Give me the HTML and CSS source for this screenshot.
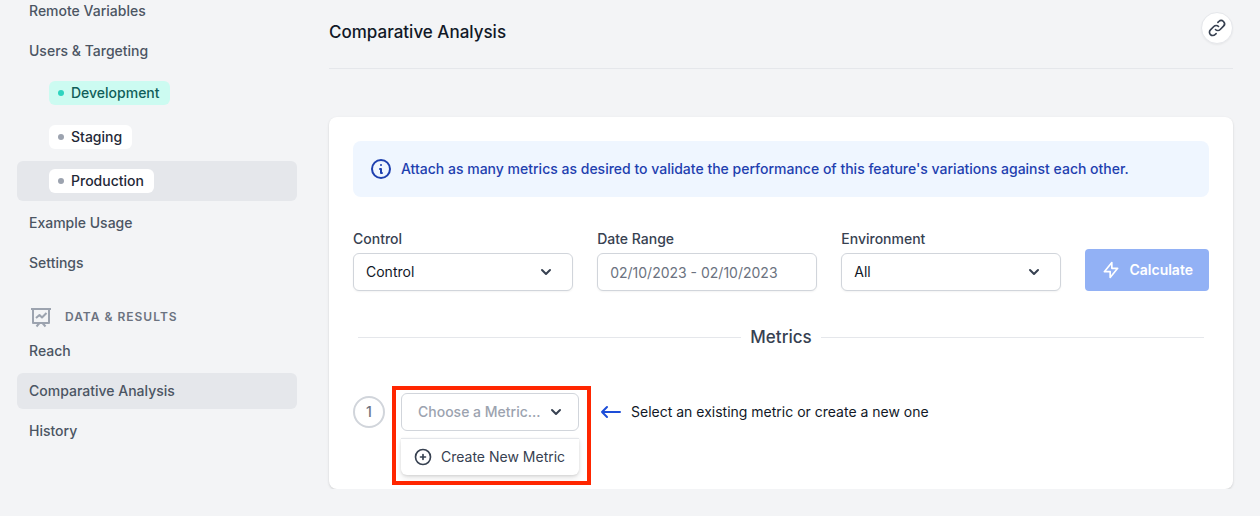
FILE: index.html
```html
<!DOCTYPE html>
<html lang="en">
<head>
<meta charset="utf-8">
<title>Comparative Analysis</title>
<link rel="stylesheet" href="styles.css">
</head>
<body>
<div class="layout">
  <nav class="sidebar" aria-label="Feature">
    <a class="nav-link" href="#variables">Remote Variables</a>
    <a class="nav-link" href="#targeting">Users &amp; Targeting</a>
    <a class="nav-env" href="#development"><span class="badge badge-teal">Development</span></a>
    <a class="nav-env" href="#staging"><span class="badge">Staging</span></a>
    <a class="nav-env is-active" href="#production"><span class="badge">Production</span></a>
    <a class="nav-link" href="#usage">Example Usage</a>
    <a class="nav-link" href="#settings">Settings</a>
    <h2 class="nav-heading">
      <svg class="icon-24" viewBox="0 0 24 24" fill="none" stroke="currentColor" stroke-width="2" stroke-linejoin="round" aria-hidden="true"><path d="M2 4H22M4 4V18H20V4M7 13L10.500 10L13 12.500L17.500 8M10.500 18L7.500 21.500M13.500 18L16.500 21.500"/></svg>
      Data &amp; Results
    </h2>
    <a class="nav-link" href="#reach">Reach</a>
    <a class="nav-link is-active" href="#analysis" aria-current="page">Comparative Analysis</a>
    <a class="nav-link" href="#history">History</a>
  </nav>

  <main class="main">
    <header class="page-header">
      <h1 class="page-title">Comparative Analysis</h1>
      <button class="link-button" type="button" aria-label="Copy link">
        <svg class="icon-20" viewBox="0 0 24 24" fill="none" stroke="currentColor" stroke-width="2" stroke-linecap="round" stroke-linejoin="round" aria-hidden="true"><path d="M13.828 10.172a4 4 0 00-5.656 0l-4 4a4 4 0 105.656 5.656l1.102-1.101m-.758-4.899a4 4 0 005.656 0l4-4a4 4 0 00-5.656-5.656l-1.100 1.100"/></svg>
      </button>
    </header>

    <section class="card">
      <div class="notice">
        <svg class="icon-24" viewBox="0 0 24 24" fill="none" stroke="currentColor" stroke-width="2" stroke-linecap="round" stroke-linejoin="round" aria-hidden="true"><path d="M13 16h-1v-4h-1m1-4h.01M21 12a9 9 0 11-18 0 9 9 0 0118 0z"/></svg>
        <p class="notice-text">Attach as many metrics as desired to validate the performance of this feature's variations against each other.</p>
      </div>

      <form class="filters">
        <div class="field">
          <label class="field-label" for="control">Control</label>
          <div class="select">
            <select class="input" id="control"><option>Control</option></select>
            <svg class="chevron select-chevron" viewBox="0 0 20 20" fill="currentColor" aria-hidden="true"><path fill-rule="evenodd" d="M5.293 7.293a1 1 0 011.414 0L10 10.586l3.293-3.293a1 1 0 111.414 1.414l-4 4a1 1 0 01-1.414 0l-4-4a1 1 0 010-1.414z"/></svg>
          </div>
        </div>
        <div class="field">
          <label class="field-label" for="range">Date Range</label>
          <input class="input input-muted" id="range" type="text" value="02/10/2023 - 02/10/2023">
        </div>
        <div class="field">
          <label class="field-label" for="environment">Environment</label>
          <div class="select">
            <select class="input" id="environment"><option>All</option></select>
            <svg class="chevron select-chevron" viewBox="0 0 20 20" fill="currentColor" aria-hidden="true"><path fill-rule="evenodd" d="M5.293 7.293a1 1 0 011.414 0L10 10.586l3.293-3.293a1 1 0 111.414 1.414l-4 4a1 1 0 01-1.414 0l-4-4a1 1 0 010-1.414z"/></svg>
          </div>
        </div>
        <button class="calculate" type="button">
          <svg class="icon-20" viewBox="0 0 24 24" fill="none" stroke="currentColor" stroke-width="2" stroke-linecap="round" stroke-linejoin="round" aria-hidden="true"><path d="M13 10V3L4 14h7v7l9-11h-7z"/></svg>
          Calculate
        </button>
      </form>

      <h2 class="divider">Metrics</h2>

      <div class="metric-row">
        <span class="step">1</span>
        <div class="dropdown">
          <button class="dropdown-toggle" type="button" aria-haspopup="menu" aria-expanded="true">
            Choose a Metric...
            <svg class="chevron" viewBox="0 0 20 20" fill="currentColor" aria-hidden="true"><path fill-rule="evenodd" d="M5.293 7.293a1 1 0 011.414 0L10 10.586l3.293-3.293a1 1 0 111.414 1.414l-4 4a1 1 0 01-1.414 0l-4-4a1 1 0 010-1.414z"/></svg>
          </button>
          <div class="menu" role="menu">
            <button class="menu-item" type="button" role="menuitem">
              <svg class="icon-20" viewBox="0 0 24 24" fill="none" stroke="currentColor" stroke-width="2" stroke-linecap="round" stroke-linejoin="round" aria-hidden="true"><path d="M12 9v6m3-3H9m12 0a9 9 0 11-18 0 9 9 0 0118 0z"/></svg>
              Create New Metric
            </button>
          </div>
          <div class="highlight"></div>
        </div>
        <p class="hint">
          <svg class="icon-24" viewBox="0 0 24 24" fill="none" stroke="currentColor" stroke-width="2" stroke-linecap="round" stroke-linejoin="round" aria-hidden="true"><path d="M8 7L3 12m0 0l5 5m-5-5h18"/></svg>
          Select an existing metric or create a new one
        </p>
      </div>
    </section>
  </main>
</div>
</body>
</html>
```

FILE: styles.css
```css
* {
  box-sizing: border-box;
  margin: 0;
}

body {
  background: #f3f4f6;
  color: #111827;
  font: 500 14px/20px Inter, sans-serif;
}

button,
input,
select {
  font: inherit;
  color: inherit;
}

svg {
  display: block;
  flex: none;
}

.icon-20 { width: 20px; height: 20px; }
.icon-24 { width: 24px; height: 24px; }
.chevron { width: 20px; height: 20px; color: #374151; }

.layout {
  display: grid;
  grid-template-columns: 280px minmax(0, 1fr);
  gap: 32px;
  padding: 0 27px 0 17px;
}

/* Sidebar */
.sidebar {
  display: flex;
  flex-direction: column;
  gap: 4px;
  margin-top: -7px;
}

.nav-link,
.nav-env {
  border-radius: 6px;
  color: #4b5563;
  text-decoration: none;
}

.nav-link { padding: 8px 12px; }
.nav-env { display: flex; padding: 8px 32px; }
.is-active { background: #e5e7eb; }

.badge {
  display: flex;
  align-items: center;
  gap: 7px;
  padding: 2px 10px 2px 9px;
  border-radius: 6px;
  background: #fff;
  color: #1f2937;
}

.badge::before {
  content: "";
  width: 6px;
  height: 6px;
  border-radius: 50%;
  background: #9ca3af;
}

.badge-teal { background: #ccfbf1; color: #115e59; }
.badge-teal::before { background: #2dd4bf; }

.nav-heading {
  display: flex;
  align-items: center;
  gap: 12px;
  margin-top: 20px;
  padding: 0 12px;
  color: #6b7280;
  font-size: 12px;
  font-weight: 600;
  letter-spacing: 1px;
  text-transform: uppercase;
}

.nav-heading svg { color: #9ca3af; }

/* Page header */
.page-header {
  display: flex;
  align-items: center;
  justify-content: space-between;
  padding: 12px 0 24px;
  border-bottom: 1px solid #e5e7eb;
}

.page-title {
  font-size: 17px;
  font-weight: 500;
  line-height: 24px;
  padding-top: 8px;
}

.link-button {
  display: grid;
  place-items: center;
  width: 32px;
  height: 32px;
  padding: 0;
  border: 1px solid #e5e7eb;
  border-radius: 50%;
  background: #fff;
  color: #374151;
  box-shadow: 0 1px 2px rgba(0, 0, 0, 0.05);
}

.card {
  margin-top: 48px;
  padding: 24px;
  border-radius: 8px;
  background: #fff;
  box-shadow: 0 1px 3px rgba(0, 0, 0, 0.1), 0 1px 2px rgba(0, 0, 0, 0.06);
}

.notice {
  display: flex;
  align-items: center;
  gap: 8px;
  padding: 16px;
  border-radius: 8px;
  background: #eff6ff;
  color: #1e40af;
}

/* Filters */
.filters {
  display: grid;
  grid-template-columns: repeat(3, minmax(0, 1fr)) auto;
  align-items: end;
  gap: 24px;
  margin-top: 32px;
}

.field-label {
  display: block;
  margin-bottom: 4px;
  color: #374151;
}

.select { position: relative; }

.input {
  appearance: none;
  display: block;
  width: 100%;
  height: 38px;
  padding: 0 12px;
  border: 1px solid #d1d5db;
  border-radius: 6px;
  background: #fff;
  font-weight: 400;
  box-shadow: 0 1px 2px rgba(0, 0, 0, 0.05);
}

.input-muted { color: #6b7280; }

.select-chevron {
  position: absolute;
  top: 9px;
  right: 17px;
  pointer-events: none;
}

.calculate {
  display: flex;
  align-items: center;
  gap: 8px;
  height: 42px;
  padding: 0 16px;
  border: 0;
  border-radius: 4px;
  background: #92b1f5;
  color: #fff;
  font-weight: 600;
}

.divider {
  display: flex;
  align-items: center;
  gap: 9px;
  margin-top: 32px;
  padding: 0 5px;
  color: #374151;
  font-size: 17px;
  font-weight: 500;
  line-height: 28px;
}

.divider::before,
.divider::after {
  content: "";
  flex: 1;
  border-top: 1px solid #e5e7eb;
}

/* Metric picker */
.metric-row {
  display: flex;
  align-items: center;
  margin: 42px 0 34px;
}

.step {
  width: 32px;
  height: 32px;
  margin-right: 16px;
  border: 2px solid #d1d5db;
  border-radius: 50%;
  color: #6b7280;
  line-height: 28px;
  text-align: center;
}

.dropdown {
  position: relative;
  width: 178px;
}

.dropdown-toggle {
  display: flex;
  align-items: center;
  justify-content: space-between;
  width: 100%;
  height: 38px;
  padding: 0 12px 0 16px;
  border: 1px solid #d1d5db;
  border-radius: 6px;
  background: #fff;
  color: #9ca3af;
  white-space: nowrap;
}

.menu {
  position: absolute;
  top: 45px;
  left: 0;
  width: 100%;
  border-top: 1px solid #e5e7eb;
  border-radius: 0 0 6px 6px;
  background: #fff;
  box-shadow: 0 4px 6px rgba(0, 0, 0, 0.08), 0 1px 3px rgba(0, 0, 0, 0.12);
}

.menu-item {
  display: flex;
  align-items: center;
  gap: 8px;
  width: 100%;
  height: 36px;
  padding: 0 12px;
  border: 0;
  background: none;
  color: #374151;
  font-weight: 400;
  white-space: nowrap;
}

.highlight {
  position: absolute;
  inset: -7px -12px -54px -9px;
  border: 4px solid #ff2600;
  pointer-events: none;
}

.hint {
  display: flex;
  align-items: center;
  gap: 8px;
  margin-left: 20px;
  font-weight: 400;
}

.hint svg { color: #1d4ed8; }
```
